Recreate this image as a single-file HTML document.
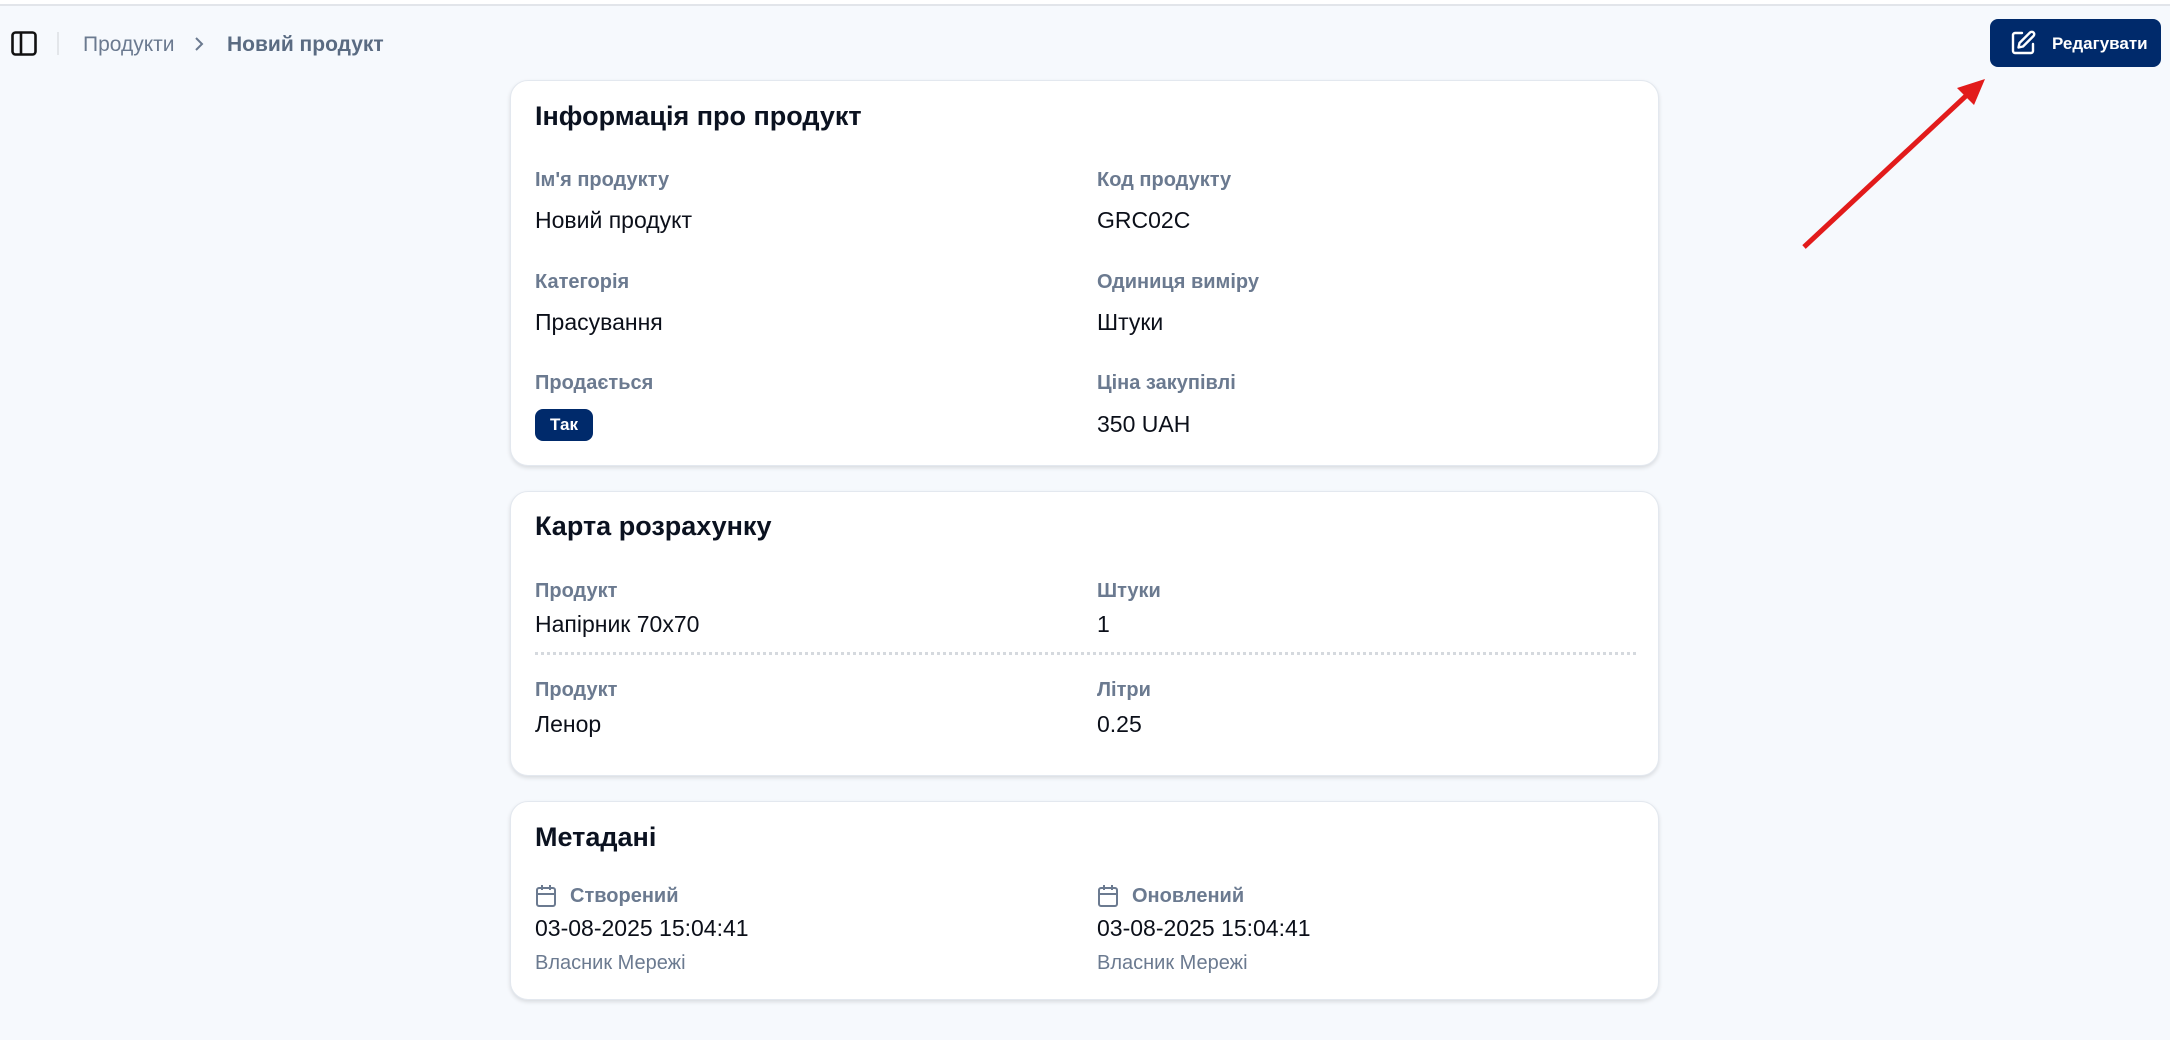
<!DOCTYPE html>
<html><head><meta charset="utf-8"><style>
*{margin:0;padding:0;box-sizing:border-box}
body{width:2170px;height:1040px;background:#f6f9fd;font-family:"Liberation Sans","Noto Sans CJK SC",sans-serif;position:relative;overflow:hidden}
.t{position:absolute;white-space:nowrap;line-height:1}
.card{position:absolute;left:510px;width:1149px;background:#fff;border:1px solid #e3e8ef;border-radius:18px;box-shadow:0 2px 4px rgba(0,0,0,.12)}
.h{font-size:27px;font-weight:600;color:#0b1220}
.l{font-size:20px;font-weight:600;color:#6b7a90}
.v{font-size:23px;color:#0b0f19}
.o{font-size:20px;color:#6b7a90}
</style></head><body>
<div style="position:absolute;left:0;top:0;width:2170px;height:6px;background:#fff;border-bottom:2px solid #e2e5ea"></div>
<svg style="position:absolute;left:11px;top:31px" width="26" height="25" viewBox="0 0 26 25"><rect x="1.5" y="1.5" width="23" height="22" rx="3" fill="none" stroke="#111" stroke-width="2.6"/><line x1="10" y1="2" x2="10" y2="23" stroke="#111" stroke-width="2.6"/></svg>
<div style="position:absolute;left:57px;top:32px;width:2px;height:23px;background:#e3e6ea"></div>
<div class="t" style="left:83px;top:34px;font-size:21px;color:#6b7a90">Продукти</div>
<svg style="position:absolute;left:193px;top:36px" width="12" height="16" viewBox="0 0 12 16"><path d="M3 2l6 6-6 6" fill="none" stroke="#6b7a90" stroke-width="2"/></svg>
<div class="t" style="left:227px;top:34px;font-size:21px;font-weight:700;color:#5a6b82">Новий продукт</div>

<div style="position:absolute;left:1990px;top:19px;width:171px;height:48px;background:#002a6b;border-radius:8px"></div>
<svg style="position:absolute;left:2010px;top:30px" width="27" height="26" viewBox="0 0 27 26" fill="none" stroke="#fff" stroke-width="2.4" stroke-linecap="round" stroke-linejoin="round"><path d="M12 3H5a2 2 0 0 0-2 2v16a2 2 0 0 0 2 2h16a2 2 0 0 0 2-2v-7"/><path d="M20 2.5a2.4 2.4 0 0 1 3.5 3.5L13 16.5l-4.5 1 1-4.5z"/></svg>
<div class="t" style="left:2052px;top:35px;font-size:17px;font-weight:700;color:#fff">Редагувати</div>

<svg style="position:absolute;left:0;top:0" width="2170" height="1040"><line x1="1804" y1="247" x2="1968" y2="94" stroke="#e21b1b" stroke-width="5"/><polygon points="1985,79 1957,88 1974,105" fill="#e21b1b"/></svg>

<div class="card" style="top:80px;height:386px"></div>
<div class="t h" style="left:535px;top:103px">Інформація про продукт</div>
<div class="t l" style="left:535px;top:170px">Ім'я продукту</div>
<div class="t v" style="left:535px;top:209px">Новий продукт</div>
<div class="t l" style="left:535px;top:272px">Категорія</div>
<div class="t v" style="left:535px;top:311px">Прасування</div>
<div class="t l" style="left:535px;top:373px">Продається</div>
<div style="position:absolute;left:535px;top:409px;width:58px;height:32px;background:#002a6b;border-radius:8px;color:#fff;font-size:17px;font-weight:700;text-align:center;line-height:32px">Так</div>
<div class="t l" style="left:1097px;top:170px">Код продукту</div>
<div class="t v" style="left:1097px;top:209px">GRC02C</div>
<div class="t l" style="left:1097px;top:272px">Одиниця виміру</div>
<div class="t v" style="left:1097px;top:311px">Штуки</div>
<div class="t l" style="left:1097px;top:373px">Ціна закупівлі</div>
<div class="t v" style="left:1097px;top:413px">350 UAH</div>

<div class="card" style="top:491px;height:285px"></div>
<div class="t h" style="left:535px;top:513px">Карта розрахунку</div>
<div class="t l" style="left:535px;top:581px">Продукт</div>
<div class="t v" style="left:535px;top:613px">Напірник 70x70</div>
<div class="t l" style="left:1097px;top:581px">Штуки</div>
<div class="t v" style="left:1097px;top:613px">1</div>
<div style="position:absolute;left:535px;top:652px;width:1101px;border-top:3px dotted #d5d9de"></div>
<div class="t l" style="left:535px;top:680px">Продукт</div>
<div class="t v" style="left:535px;top:713px">Ленор</div>
<div class="t l" style="left:1097px;top:680px">Літри</div>
<div class="t v" style="left:1097px;top:713px">0.25</div>

<div class="card" style="top:801px;height:199px"></div>
<div class="t h" style="left:535px;top:824px">Метадані</div>
<svg style="position:absolute;left:535px;top:884px" width="22" height="24" viewBox="0 0 22 24" fill="none" stroke="#6b7a90" stroke-width="2"><rect x="2" y="4" width="18" height="18" rx="2"/><line x1="2" y1="10" x2="20" y2="10"/><line x1="7" y1="1" x2="7" y2="6"/><line x1="15" y1="1" x2="15" y2="6"/></svg>
<div class="t l" style="left:570px;top:886px">Створений</div>
<div class="t v" style="left:535px;top:917px">03-08-2025 15:04:41</div>
<div class="t o" style="left:535px;top:953px">Власник Мережі</div>
<svg style="position:absolute;left:1097px;top:884px" width="22" height="24" viewBox="0 0 22 24" fill="none" stroke="#6b7a90" stroke-width="2"><rect x="2" y="4" width="18" height="18" rx="2"/><line x1="2" y1="10" x2="20" y2="10"/><line x1="7" y1="1" x2="7" y2="6"/><line x1="15" y1="1" x2="15" y2="6"/></svg>
<div class="t l" style="left:1132px;top:886px">Оновлений</div>
<div class="t v" style="left:1097px;top:917px">03-08-2025 15:04:41</div>
<div class="t o" style="left:1097px;top:953px">Власник Мережі</div>
</body></html>
